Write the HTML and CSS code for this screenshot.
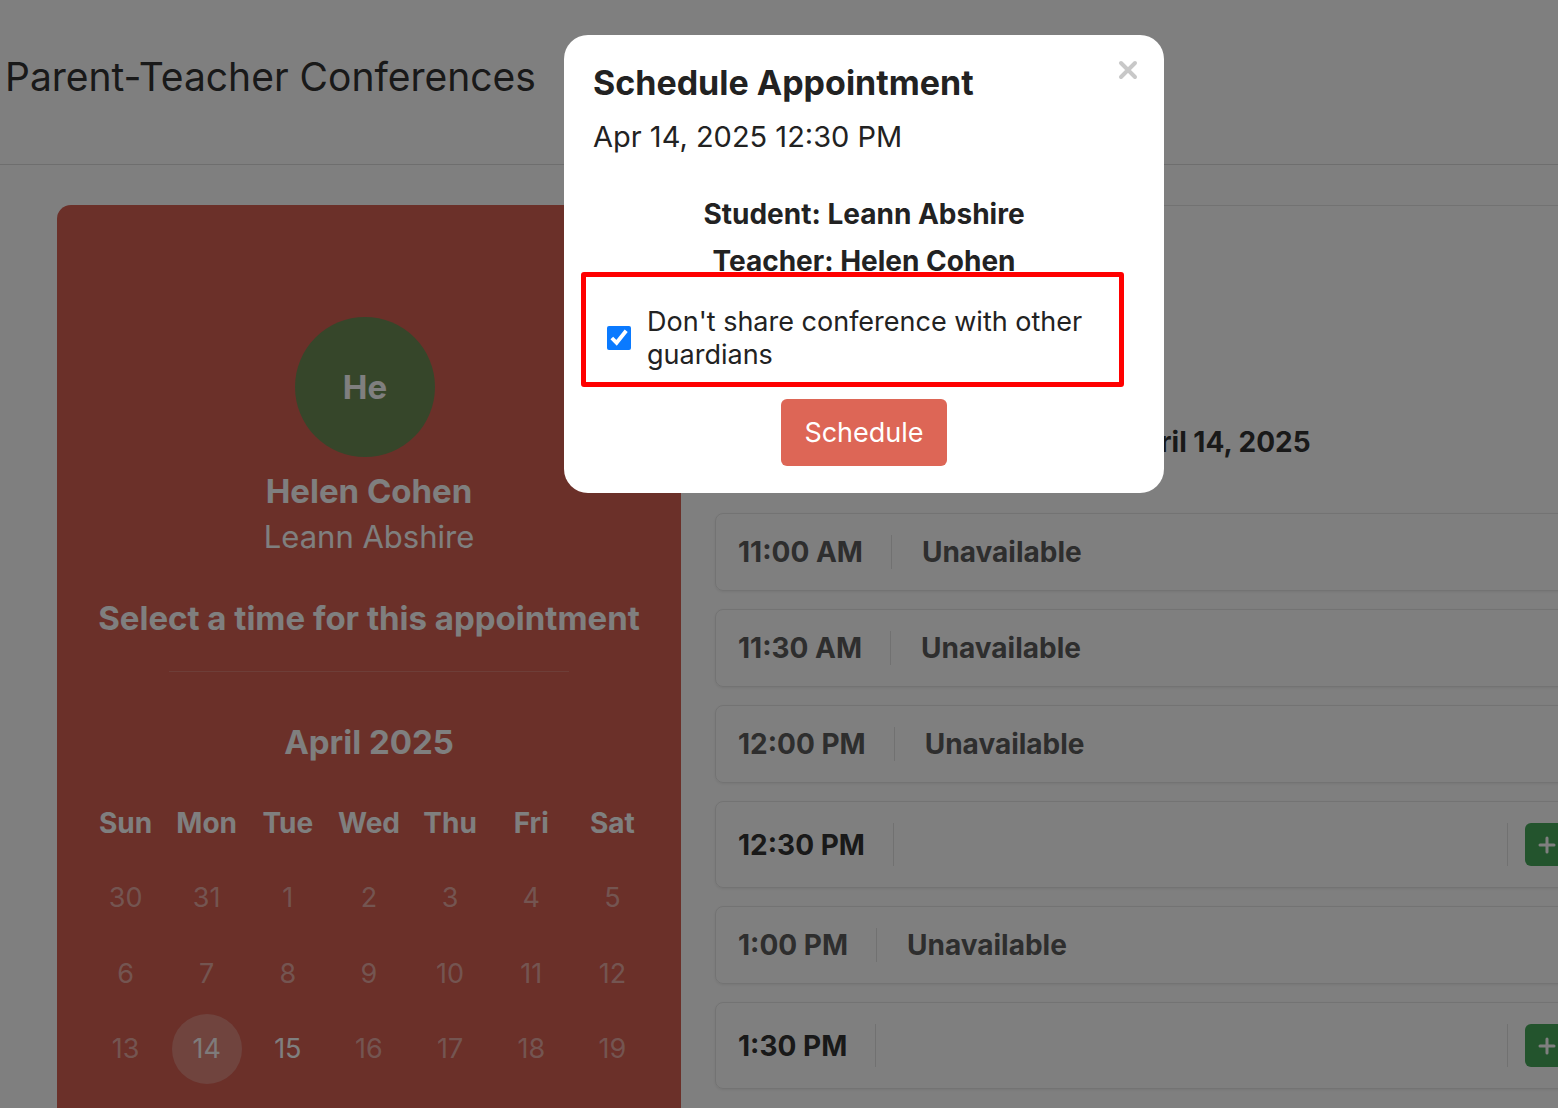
FILE: index.html
```html
<!DOCTYPE html>
<html lang="en">
<head>
  <meta charset="UTF-8" />
  <meta name="viewport" content="width=device-width, initial-scale=1.0"/>
  <title>Parent-Teacher Conferences</title>
  <link rel="stylesheet" href="styles.css">
</head>
<body>

  <div class="page-header">
    <h1 class="page-title">Parent-Teacher Conferences</h1>
  </div>

  <div class="layout">
    <div class="sidebar">
      <div class="avatar">He</div>
      <div class="teacher-name">Helen Cohen</div>
      <div class="student-name">Leann Abshire</div>
      <div class="sidebar-prompt">Select a time for this appointment</div>
      <div class="sidebar-rule"></div>
      <div class="month-title">April 2025</div>

      <div class="calendar">
        <div class="weekday">Sun</div>
        <div class="weekday">Mon</div>
        <div class="weekday">Tue</div>
        <div class="weekday">Wed</div>
        <div class="weekday">Thu</div>
        <div class="weekday">Fri</div>
        <div class="weekday">Sat</div>

        <div class="day">30</div>
        <div class="day">31</div>
        <div class="day">1</div>
        <div class="day">2</div>
        <div class="day">3</div>
        <div class="day">4</div>
        <div class="day">5</div>

        <div class="day">6</div>
        <div class="day">7</div>
        <div class="day">8</div>
        <div class="day">9</div>
        <div class="day">10</div>
        <div class="day">11</div>
        <div class="day">12</div>

        <div class="day">13</div>
        <div class="day selected">14</div>
        <div class="day open">15</div>
        <div class="day">16</div>
        <div class="day">17</div>
        <div class="day">18</div>
        <div class="day">19</div>
      </div>
    </div>

    <div class="main">
      <h2 class="day-heading">Monday, April 14, 2025</h2>

      <div class="slot-list">
        <div class="slot unavailable">
          <div class="slot-time">11:00 AM</div>
          <div class="slot-body">Unavailable</div>
        </div>
        <div class="slot unavailable">
          <div class="slot-time">11:30 AM</div>
          <div class="slot-body">Unavailable</div>
        </div>
        <div class="slot unavailable">
          <div class="slot-time">12:00 PM</div>
          <div class="slot-body">Unavailable</div>
        </div>
        <div class="slot">
          <div class="slot-time">12:30 PM</div>
          <div class="slot-body"></div>
          <div class="slot-actions">
            <button class="add-btn" aria-label="Add">
              <svg width="20" height="20" viewBox="0 0 20 20"><path d="M10 3v14M3 10h14" stroke="#fff" stroke-width="3" stroke-linecap="round"/></svg>
            </button>
          </div>
        </div>
        <div class="slot unavailable">
          <div class="slot-time">1:00 PM</div>
          <div class="slot-body">Unavailable</div>
        </div>
        <div class="slot">
          <div class="slot-time">1:30 PM</div>
          <div class="slot-body"></div>
          <div class="slot-actions">
            <button class="add-btn" aria-label="Add">
              <svg width="20" height="20" viewBox="0 0 20 20"><path d="M10 3v14M3 10h14" stroke="#fff" stroke-width="3" stroke-linecap="round"/></svg>
            </button>
          </div>
        </div>
      </div>
    </div>
  </div>

  <div class="backdrop"></div>

  <div class="modal">
    <button class="modal-close" aria-label="Close">
      <svg width="20" height="20" viewBox="0 0 20 20"><path d="M3 3l14 14M17 3L3 17" stroke="#c8c8c8" stroke-width="4" stroke-linecap="round"/></svg>
    </button>
    <div class="modal-title">Schedule Appointment</div>
    <div class="modal-date">Apr 14, 2025 12:30 PM</div>

    <div class="modal-line first">Student: Leann Abshire</div>
    <div class="modal-line">Teacher: Helen Cohen</div>

    <label class="share-box">
      <input type="checkbox" class="share-check" checked>
      <span>Don't share conference with other guardians</span>
    </label>

    <div class="modal-actions">
      <button class="schedule-btn">Schedule</button>
    </div>
  </div>

</body>
</html>
```

FILE: styles.css
```css
body {
  margin: 0;
  font-family: Inter, Roboto, "Liberation Sans", sans-serif;
  background-color: #fff;
  color: #333;
  overflow: hidden;
  height: 1108px;
}

.page-header {
  height: 165px;
  border-bottom: 1px solid #dcdcdc;
  box-sizing: border-box;
  padding-top: 53px;
}

.page-title {
  margin: 0;
  padding-left: 5px;
  font-size: 39px;
  font-weight: 400;
  line-height: 48px;
  color: #333;
}

.layout {
  display: flex;
  width: 1569px;
  padding: 40px 0 0 57px;
}

/* left column */
.sidebar {
  width: 624px;
  flex-shrink: 0;
  height: 1000px;
  box-sizing: border-box;
  padding: 112px 28px 0;
  background-color: #d66052;
  border-radius: 14px 14px 0 0;
  color: #fff;
  text-align: center;
}

.avatar {
  width: 140px;
  height: 140px;
  margin: 0 auto;
  position: relative;
  left: -4px;
  border-radius: 50%;
  background-color: #6c8c55;
  display: flex;
  align-items: center;
  justify-content: center;
  font-size: 33px;
  font-weight: bold;
}

.teacher-name {
  margin-top: 14px;
  font-size: 33px;
  font-weight: bold;
  line-height: 40px;
}

.student-name {
  margin-top: 6px;
  font-size: 31px;
  line-height: 40px;
}

.sidebar-prompt {
  margin-top: 41px;
  font-size: 33px;
  font-weight: bold;
  line-height: 40px;
}

.sidebar-rule {
  width: 400px;
  height: 1px;
  margin: 33px auto 0;
  background-color: rgba(255, 255, 255, 0.18);
}

.month-title {
  margin-top: 50px;
  font-size: 33px;
  font-weight: bold;
  line-height: 40px;
}

.calendar {
  display: grid;
  grid-template-columns: repeat(7, 1fr);
  grid-template-rows: 52px;
  grid-auto-rows: 70px;
  row-gap: 5.5px;
  margin-top: 43px;
}

.weekday {
  align-self: start;
  font-size: 28px;
  font-weight: bold;
  line-height: 36px;
}

.day {
  width: 70px;
  height: 70px;
  margin: 0 auto;
  border-radius: 50%;
  display: flex;
  align-items: center;
  justify-content: center;
  font-size: 27px;
  color: rgba(255, 255, 255, 0.48);
}

.day.selected {
  background-color: rgba(255, 255, 255, 0.25);
  color: rgba(255, 255, 255, 0.95);
}

.day.open {
  color: #fff;
}

/* right column */
.main {
  flex: 1;
  border-top: 1px solid #e4e4e4;
  padding: 0 34px;
}

.day-heading {
  margin: 218px 0 0;
  text-align: center;
  font-size: 28px;
  line-height: 36px;
  color: #333;
}

.slot-list {
  display: flex;
  flex-direction: column;
  gap: 18px;
  margin-top: 53px;
}

.slot {
  display: flex;
  align-items: center;
  padding: 21px 22px;
  border: 1px solid #e6e6e6;
  border-radius: 8px;
  box-shadow: 0 1px 3px rgba(0, 0, 0, 0.08);
  font-size: 28px;
  font-weight: bold;
  line-height: 34px;
  color: #333;
}

.slot.unavailable {
  color: #5c5c5c;
}

.slot-time {
  padding-right: 28px;
  border-right: 1px solid #e2e2e2;
  align-self: stretch;
  display: flex;
  align-items: center;
}

.slot-body {
  flex: 1;
  padding-left: 30px;
}

.slot-actions {
  padding-left: 17px;
  border-left: 1px solid #e2e2e2;
}

.add-btn {
  width: 44px;
  height: 43px;
  border: none;
  border-radius: 6px;
  background-color: #46a85a;
  display: flex;
  align-items: center;
  justify-content: center;
  padding: 0;
}

/* modal */
.backdrop {
  position: fixed;
  inset: 0;
  background-color: rgba(0, 0, 0, 0.5);
}

.modal {
  position: fixed;
  left: 564px;
  top: 35px;
  width: 600px;
  box-sizing: border-box;
  padding: 28px 29px 27px;
  background-color: #fff;
  border-radius: 24px;
  color: #222;
}

.modal-close {
  position: absolute;
  top: 25px;
  right: 26px;
  background: none;
  border: none;
  padding: 0;
  width: 20px;
  height: 20px;
}

.modal-title {
  font-size: 34px;
  font-weight: bold;
  line-height: 40px;
}

.modal-date {
  margin-top: 16px;
  font-size: 29px;
  line-height: 36px;
}

.modal-line {
  margin-top: 13px;
  text-align: center;
  font-size: 28px;
  font-weight: bold;
  line-height: 34px;
}

.modal-line.first {
  margin-top: 42px;
}

.share-box {
  display: flex;
  align-items: center;
  gap: 16px;
  width: 543px;
  box-sizing: border-box;
  margin: -6px 0 0 -12px;
  padding: 28px 20px 11px 21px;
  border: 5px solid #ff0000;
  border-radius: 3px;
  font-size: 27px;
  line-height: 33px;
  color: #222;
}

.share-check {
  width: 24px;
  height: 24px;
  margin: 0;
  flex-shrink: 0;
  accent-color: #0a7aff;
}

.modal-actions {
  display: flex;
  justify-content: center;
  margin-top: 12px;
}

.schedule-btn {
  width: 166px;
  height: 67px;
  border: none;
  border-radius: 6px;
  background-color: #dd6656;
  color: #fff;
  font-family: inherit;
  font-size: 27px;
}
```
